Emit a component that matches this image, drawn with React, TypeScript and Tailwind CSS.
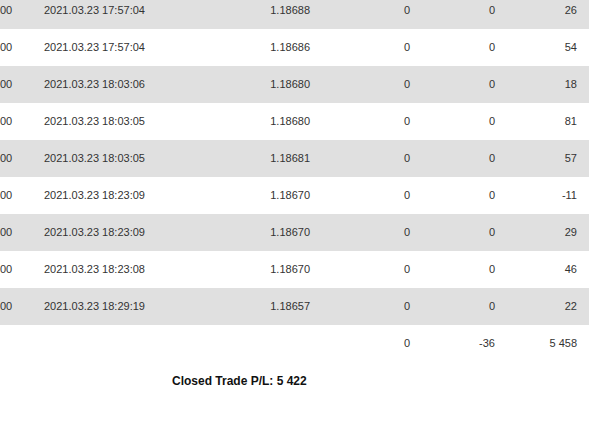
const rows = [
  { time: "2021.03.23 17:57:04", price: "1.18688", a: "0", b: "0", pl: "26" },
  { time: "2021.03.23 17:57:04", price: "1.18686", a: "0", b: "0", pl: "54" },
  { time: "2021.03.23 18:03:06", price: "1.18680", a: "0", b: "0", pl: "18" },
  { time: "2021.03.23 18:03:05", price: "1.18680", a: "0", b: "0", pl: "81" },
  { time: "2021.03.23 18:03:05", price: "1.18681", a: "0", b: "0", pl: "57" },
  { time: "2021.03.23 18:23:09", price: "1.18670", a: "0", b: "0", pl: "-11" },
  { time: "2021.03.23 18:23:09", price: "1.18670", a: "0", b: "0", pl: "29" },
  { time: "2021.03.23 18:23:08", price: "1.18670", a: "0", b: "0", pl: "46" },
  { time: "2021.03.23 18:29:19", price: "1.18657", a: "0", b: "0", pl: "22" },
];

const App = () => {
  return (
    <div
      className="w-[600px] h-[424px] overflow-hidden bg-white text-[11px] text-[#333]"
      style={{ fontFamily: '"Liberation Sans", Arial, sans-serif' }}
    >
      <div className="w-[589px] -mt-[8px]">
        {rows.map((r, i) => (
          <div
            key={i}
            className={`flex h-[37px] items-center ${i % 2 === 0 ? "bg-[#e0e0e0]" : "bg-white"}`}
          >
            <div className="w-[44px]">00</div>
            <div className="w-[166px]">{r.time}</div>
            <div className="w-[100px] text-right">{r.price}</div>
            <div className="w-[100px] text-right">{r.a}</div>
            <div className="w-[85px] text-right">{r.b}</div>
            <div className="w-[82px] text-right">{r.pl}</div>
          </div>
        ))}

        {/* totals */}
        <div className="flex h-[37px] items-center">
          <div className="w-[310px]" />
          <div className="w-[100px] text-right">0</div>
          <div className="w-[85px] text-right">-36</div>
          <div className="w-[82px] text-right">5 458</div>
        </div>
      </div>

      <div className="pl-[172px] pt-[10px] text-[12px] font-bold text-[#111]">
        Closed Trade P/L: 5 422
      </div>
    </div>
  );
};

export default App;
